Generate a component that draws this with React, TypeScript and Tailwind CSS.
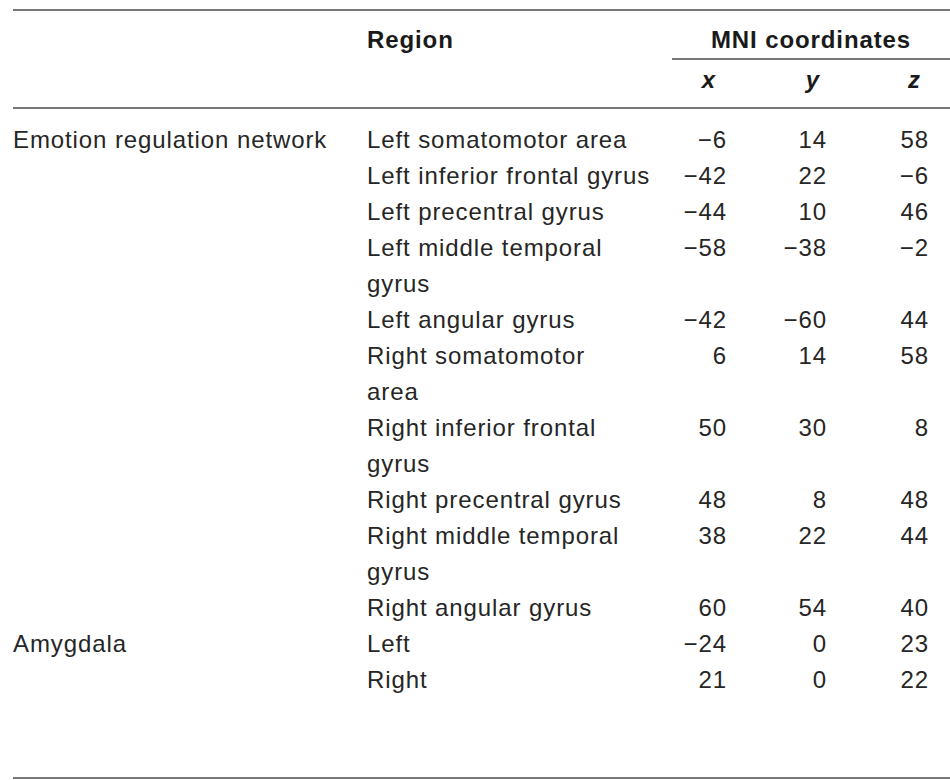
const font = { fontFamily: '"Liberation Sans", Arial, sans-serif' };

type Row = { group?: string; region: string[]; x: string; y: string; z: string };

const rows: Row[] = [
  { group: 'Emotion regulation network', region: ['Left somatomotor area'], x: '−6', y: '14', z: '58' },
  { region: ['Left inferior frontal gyrus'], x: '−42', y: '22', z: '−6' },
  { region: ['Left precentral gyrus'], x: '−44', y: '10', z: '46' },
  { region: ['Left middle temporal', 'gyrus'], x: '−58', y: '−38', z: '−2' },
  { region: ['Left angular gyrus'], x: '−42', y: '−60', z: '44' },
  { region: ['Right somatomotor', 'area'], x: '6', y: '14', z: '58' },
  { region: ['Right inferior frontal', 'gyrus'], x: '50', y: '30', z: '8' },
  { region: ['Right precentral gyrus'], x: '48', y: '8', z: '48' },
  { region: ['Right middle temporal', 'gyrus'], x: '38', y: '22', z: '44' },
  { region: ['Right angular gyrus'], x: '60', y: '54', z: '40' },
  { group: 'Amygdala', region: ['Left'], x: '−24', y: '0', z: '23' },
  { region: ['Right'], x: '21', y: '0', z: '22' },
];

const cols = 'grid grid-cols-[354px_305px_76px_100px_102px]';

export default function App() {
  return (
    <div className="w-[950px] h-[780px] bg-white pt-[9px] pl-[13px] text-[#262626]" style={font}>
      <div className="border-t-2 border-b-2 border-[#777]">
        {/* Header */}
        <div className="border-b-2 border-[#777]">
          <div className={cols}>
            <div />
            <div className="pt-[11px] leading-[36px] text-[24px] font-bold tracking-[0.9px] text-[#1a1a1a]">
              Region
            </div>
            <div className="col-span-3 pt-[11px] border-b-2 border-[#777] leading-[36px] text-[24px] font-bold tracking-[0.9px] text-center text-[#1a1a1a]">
              MNI coordinates
            </div>
          </div>
          <div className={cols + ' pt-[2px] pb-[9px]'}>
            <div />
            <div />
            <div className="text-right pr-[33px] leading-[36px] text-[24px] font-bold italic text-[#1a1a1a]">x</div>
            <div className="text-right pr-[29px] leading-[36px] text-[24px] font-bold italic text-[#1a1a1a]">y</div>
            <div className="text-right pr-[30px] leading-[36px] text-[24px] font-bold italic text-[#1a1a1a]">z</div>
          </div>
        </div>

        {/* Body */}
        <div className="pt-[13px] pb-[79px]">
          {rows.map((r, i) => (
            <div key={i} className={cols + ' text-[24px] leading-[36px] tracking-[0.9px]'}>
              <div className="whitespace-nowrap">{r.group ?? ''}</div>
              <div className="whitespace-nowrap">
                {r.region.map((l, j) => (
                  <div key={j}>{l}</div>
                ))}
              </div>
              <div className="text-right pr-[21px]">{r.x}</div>
              <div className="text-right pr-[21px]">{r.y}</div>
              <div className="text-right pr-[21px]">{r.z}</div>
            </div>
          ))}
        </div>
      </div>
    </div>
  );
}
